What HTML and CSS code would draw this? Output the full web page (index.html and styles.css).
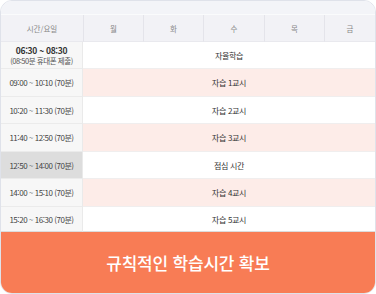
FILE: index.html
```html
<!DOCTYPE html>
<html lang="ko">
<head>
<meta charset="utf-8">
<link rel="stylesheet" href="styles.css">
</head>
<body>
<div class="card">
  <div class="topband"></div>
  <div class="grid">
    <div class="hd first">시간/요일</div>
    <div class="hd">월</div>
    <div class="hd">화</div>
    <div class="hd">수</div>
    <div class="hd">목</div>
    <div class="hd last">금</div>

    <div class="tm two"><b>06:30 ~ 08:30</b><span>(08:50분 휴대폰 제출)</span></div>
    <div class="act">자율학습</div>

    <div class="tm">09:00 ~ 10:10 (70분)</div>
    <div class="act pink">자습 1교시</div>

    <div class="tm">10:20 ~ 11:30 (70분)</div>
    <div class="act">자습 2교시</div>

    <div class="tm">11:40 ~ 12:50 (70분)</div>
    <div class="act pink">자습 3교시</div>

    <div class="tm lunch">12:50 ~ 14:00 (70분)</div>
    <div class="act">점심 시간</div>

    <div class="tm">14:00 ~ 15:10 (70분)</div>
    <div class="act pink">자습 4교시</div>

    <div class="tm">15:20 ~ 16:30 (70분)</div>
    <div class="act">자습 5교시</div>
  </div>
  <div class="banner">규칙적인 학습시간 확보</div>
</div>
</body>
</html>
```

FILE: styles.css
```css
html, body {
  margin: 0;
  padding: 0;
  background: #ffffff;
}
body {
  font-family: "Noto Sans CJK KR", "Noto Sans", sans-serif;
}
.card {
  width: 374px;
  height: 292px;
  border: 1px solid #dfe2ea;
  border-radius: 12px;
  overflow: hidden;
  display: flex;
  flex-direction: column;
  background: #fff;
}
.topband {
  height: 13px;
  background: #f3f4f8;
  border-bottom: 1px solid #fafbfc;
}
.grid {
  display: grid;
  grid-template-columns: 82px 60px 60px 61px 60px 1fr;
  grid-template-rows: 27px 27px 28px 27px 28px 27px 28px 25px;
}
.hd {
  background: #f2f2f6;
  border-left: 1px solid #e4e4ea;
  border-bottom: 1px solid #e9e9ee;
  display: flex;
  align-items: center;
  justify-content: center;
  font-size: 7.5px;
  color: #888;
}
.hd.first {
  border-left: none;
}
.tm {
  background: #f7f7f7;
  border-right: 1px solid #eaeaea;
  border-bottom: 1px solid #ebebeb;
  display: flex;
  align-items: center;
  justify-content: center;
  font-size: 8px;
  color: #444;
  letter-spacing: -0.45px;
  white-space: nowrap;
}
.tm.two {
  flex-direction: column;
  gap: 0;
}
.tm.two b {
  display: block;
  font-size: 8.5px;
  line-height: 11px;
  font-weight: 700;
  color: #333;
  letter-spacing: -0.3px;
}
.tm.two span {
  display: block;
  font-size: 7.5px;
  line-height: 10px;
  color: #555;
}
.tm.lunch {
  background: #dddddd;
}
.act {
  grid-column: 2 / 7;
  border-bottom: 1px solid #f0eeee;
  display: flex;
  align-items: center;
  justify-content: center;
  font-size: 8px;
  color: #333;
  letter-spacing: -0.3px;
}
.act.pink {
  background: #fdece8;
}
.grid > :nth-last-child(-n+2) {
  border-bottom: 1px solid #dcdcdc;
}
.banner {
  flex: 1;
  background: #f87c55;
  color: #ffffff;
  display: flex;
  align-items: center;
  justify-content: center;
  font-size: 17px;
  font-weight: 500;
  letter-spacing: -0.2px;
}
```
